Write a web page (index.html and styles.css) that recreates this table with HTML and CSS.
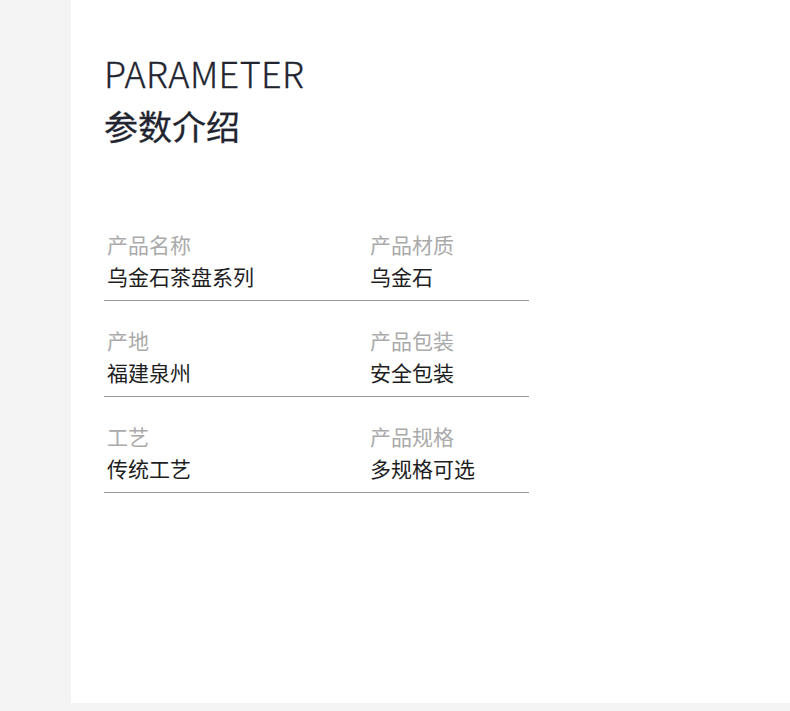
FILE: index.html
```html
<!DOCTYPE html>
<html lang="zh">
<head>
<meta charset="utf-8">
<link rel="stylesheet" href="styles.css">
</head>
<body>
<div class="panel">
  <div class="title-en">PARAMETER</div>
  <div class="title-cn">参数介绍</div>
  <div class="params">
    <div class="row">
      <div class="cell"><div class="label">产品名称</div><div class="value">乌金石茶盘系列</div></div>
      <div class="cell"><div class="label">产品材质</div><div class="value">乌金石</div></div>
    </div>
    <div class="row">
      <div class="cell"><div class="label">产地</div><div class="value">福建泉州</div></div>
      <div class="cell"><div class="label">产品包装</div><div class="value">安全包装</div></div>
    </div>
    <div class="row">
      <div class="cell"><div class="label">工艺</div><div class="value">传统工艺</div></div>
      <div class="cell"><div class="label">产品规格</div><div class="value">多规格可选</div></div>
    </div>
  </div>
</div>
</body>
</html>
```
FILE: styles.css
```css
html, body {
  margin: 0;
  padding: 0;
}
body {
  background: #f4f4f4;
  font-family: "Noto Sans CJK SC", "Noto Sans", sans-serif;
  width: 790px;
  height: 711px;
  overflow: hidden;
}
.panel {
  margin-left: 71px;
  height: 703px;
  background: #ffffff;
  padding: 50px 0 0 33px;
  box-sizing: border-box;
}
.title-en {
  font-size: 36px;
  font-weight: 300;
  line-height: 44px;
  color: #222530;
  letter-spacing: 0.4px;
  -webkit-text-stroke: 0.3px #222530;
}
.title-cn {
  font-size: 34px;
  font-weight: 400;
  line-height: 50px;
  margin-top: 7px;
  color: #222530;
  -webkit-text-stroke: 0.3px #222530;
}
.params {
  width: 425px;
  margin-top: 77px;
}
.row {
  display: flex;
  border-bottom: 1px solid #999999;
  padding: 0 0 8px 3px;
}
.row + .row {
  margin-top: 23px;
}
.cell {
  flex: 0 0 263px;
}
.cell + .cell {
  flex: 1 1 auto;
}
.label {
  font-size: 21px;
  line-height: 32px;
  color: #aaaaaa;
  font-weight: 400;
}
.value {
  font-size: 21px;
  line-height: 32px;
  color: #1e1e1e;
  font-weight: 400;
}
```
